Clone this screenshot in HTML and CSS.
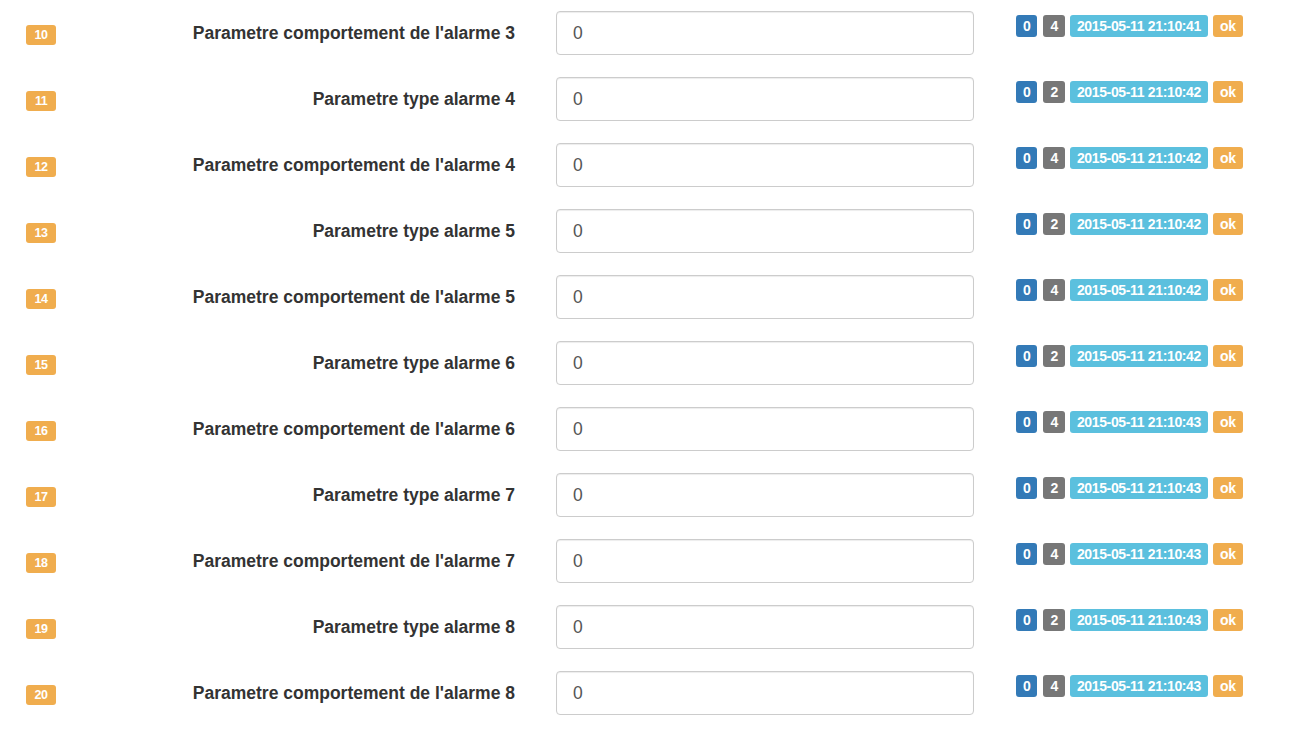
FILE: index.html
```html
<!DOCTYPE html>
<html>
<head>
<meta charset="utf-8">
<link rel="stylesheet" href="styles.css">
</head>
<body>
<div class="list">
  <div class="row"><span class="num">10</span><label class="lbl">Parametre comportement de l'alarme 3</label><div class="field">0</div><div class="tags"><span class="tag blue">0</span><span class="tag gray">4</span><span class="tag info">2015-05-11 21:10:41</span><span class="tag warn">ok</span></div></div>
  <div class="row"><span class="num">11</span><label class="lbl">Parametre type alarme 4</label><div class="field">0</div><div class="tags"><span class="tag blue">0</span><span class="tag gray">2</span><span class="tag info">2015-05-11 21:10:42</span><span class="tag warn">ok</span></div></div>
  <div class="row"><span class="num">12</span><label class="lbl">Parametre comportement de l'alarme 4</label><div class="field">0</div><div class="tags"><span class="tag blue">0</span><span class="tag gray">4</span><span class="tag info">2015-05-11 21:10:42</span><span class="tag warn">ok</span></div></div>
  <div class="row"><span class="num">13</span><label class="lbl">Parametre type alarme 5</label><div class="field">0</div><div class="tags"><span class="tag blue">0</span><span class="tag gray">2</span><span class="tag info">2015-05-11 21:10:42</span><span class="tag warn">ok</span></div></div>
  <div class="row"><span class="num">14</span><label class="lbl">Parametre comportement de l'alarme 5</label><div class="field">0</div><div class="tags"><span class="tag blue">0</span><span class="tag gray">4</span><span class="tag info">2015-05-11 21:10:42</span><span class="tag warn">ok</span></div></div>
  <div class="row"><span class="num">15</span><label class="lbl">Parametre type alarme 6</label><div class="field">0</div><div class="tags"><span class="tag blue">0</span><span class="tag gray">2</span><span class="tag info">2015-05-11 21:10:42</span><span class="tag warn">ok</span></div></div>
  <div class="row"><span class="num">16</span><label class="lbl">Parametre comportement de l'alarme 6</label><div class="field">0</div><div class="tags"><span class="tag blue">0</span><span class="tag gray">4</span><span class="tag info">2015-05-11 21:10:43</span><span class="tag warn">ok</span></div></div>
  <div class="row"><span class="num">17</span><label class="lbl">Parametre type alarme 7</label><div class="field">0</div><div class="tags"><span class="tag blue">0</span><span class="tag gray">2</span><span class="tag info">2015-05-11 21:10:43</span><span class="tag warn">ok</span></div></div>
  <div class="row"><span class="num">18</span><label class="lbl">Parametre comportement de l'alarme 7</label><div class="field">0</div><div class="tags"><span class="tag blue">0</span><span class="tag gray">4</span><span class="tag info">2015-05-11 21:10:43</span><span class="tag warn">ok</span></div></div>
  <div class="row"><span class="num">19</span><label class="lbl">Parametre type alarme 8</label><div class="field">0</div><div class="tags"><span class="tag blue">0</span><span class="tag gray">2</span><span class="tag info">2015-05-11 21:10:43</span><span class="tag warn">ok</span></div></div>
  <div class="row"><span class="num">20</span><label class="lbl">Parametre comportement de l'alarme 8</label><div class="field">0</div><div class="tags"><span class="tag blue">0</span><span class="tag gray">4</span><span class="tag info">2015-05-11 21:10:43</span><span class="tag warn">ok</span></div></div>
</div>
</body>
</html>
```
FILE: styles.css
```css
html, body {
  margin: 0;
  padding: 0;
  background: #fff;
}
body {
  font-family: "Liberation Sans", Arial, Helvetica, sans-serif;
  color: #333;
}
.list {
  display: flex;
  flex-direction: column;
  padding-top: 11px;
}
.row {
  display: flex;
  align-items: flex-start;
  height: 66px;
}
.num {
  margin-left: 26px;
  margin-top: 14px;
  width: 30px;
  height: 20px;
  line-height: 20px;
  text-align: center;
  background: #f0ad4e;
  color: #fff;
  font-weight: bold;
  font-size: 12.5px;
  letter-spacing: -0.5px;
  border-radius: 3px;
}
.lbl {
  width: 459px;
  text-align: right;
  font-weight: bold;
  font-size: 17.5px;
  line-height: 44px;
  color: #333;
  white-space: nowrap;
}
.field {
  margin-left: 41px;
  height: 42px;
  width: 400px;
  border: 1px solid #ccc;
  border-radius: 4px;
  box-shadow: inset 0 1px 1px rgba(0,0,0,0.075);
  padding-left: 16px;
  font-size: 17.5px;
  line-height: 42px;
  color: #555;
}
.tags {
  display: flex;
  gap: 5px;
  margin-left: 42px;
  margin-top: 4px;
}
.tag {
  display: inline-block;
  padding: 4px 7px;
  font-size: 14px;
  letter-spacing: -0.35px;
  line-height: 1;
  font-weight: bold;
  color: #fff;
  border-radius: 3px;
  white-space: nowrap;
}
.blue { background: #337ab7; }
.gray { background: #777; margin-left: 1px; }
.info { background: #5bc0de; }
.warn { background: #f0ad4e; }
```
